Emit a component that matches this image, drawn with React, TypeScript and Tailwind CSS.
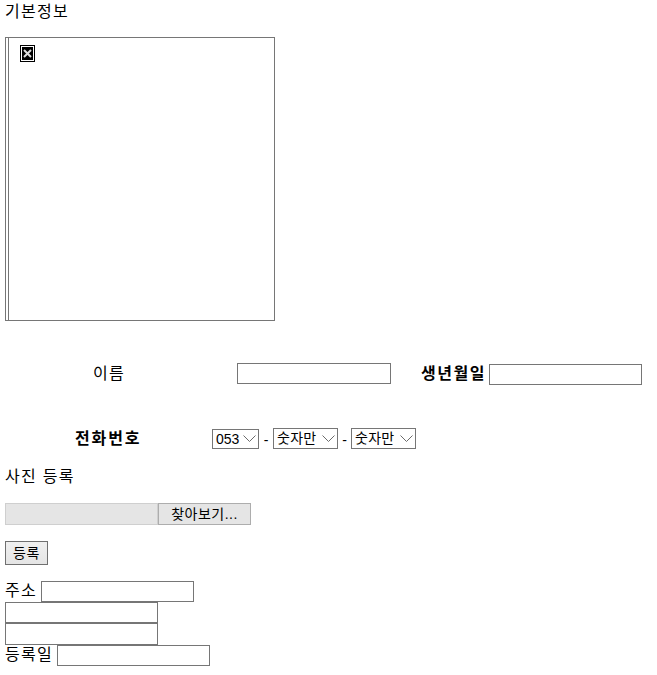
import React from "react";

function Chevron({ className }: { className: string }) {
  return (
    <svg className={className} width="13" height="7" viewBox="0 0 13 7" fill="none">
      <path d="M0.5 0.5 L6.5 6.5 L12.5 0.5" stroke="#6b6b6b" strokeWidth="1" />
    </svg>
  );
}

function Sel({ value, w, h, top, text, chev }: { value: string; w: string; h: string; top: string; text: string; chev: string }) {
  return (
    <div className={`relative ${w} ${h} ${top}`}>
      <select
        defaultValue={value}
        className={`block w-full h-full appearance-none bg-white border border-[#767676] pl-[3px] rounded-none outline-none ${text}`}
      >
        <option>{value}</option>
      </select>
      <Chevron className={`absolute right-[3px] pointer-events-none ${chev}`} />
    </div>
  );
}

const inputBase = "block border border-[#767676] bg-white rounded-none";

export default function App() {
  return (
    <div className="w-[657px] h-[675px] overflow-hidden bg-white text-black pl-[5px] font-['Liberation_Sans','Noto_Sans_CJK_KR',sans-serif] text-[16px] leading-[18px] tracking-[1.3px]">
      <div className="pt-[3px] h-[37px]">기본정보</div>

      <div className="w-[270px] h-[284px] border border-[#767676] pl-[2px]">
        <div className="h-full border-l border-[#767676] pl-[11px] pt-[7px]">
          <div className="w-[15px] h-[17px] border border-black bg-white p-[1px]">
            <div className="w-full h-full bg-black flex items-center justify-center">
              <svg width="9" height="9" viewBox="0 0 9 9">
                <path d="M1 1 L8 8 M8 1 L1 8" stroke="#dddddd" strokeWidth="2" />
              </svg>
            </div>
          </div>
        </div>
      </div>

      <div className="flex mt-[42px] h-[22px]">
        <div className="w-[232px] pl-[88px] pt-[2px]">이름</div>
        <input className={`${inputBase} w-[154px] h-[21px]`} />
        <div className="font-bold ml-[30px] w-[68px] pt-[2px] tracking-[1.5px]">생년월일</div>
        <input className={`${inputBase} w-[153px] h-[21px] mt-[1px]`} />
      </div>

      <div className="flex mt-[43px] h-[21px]">
        <div className="w-[207px] pl-[70px] pt-[2px] font-bold tracking-[1.9px]">전화번호</div>
        <Sel value="053" w="w-[47px]" h="h-[20px]" top="mt-[1px]" text="text-[14px] leading-[16px] tracking-normal" chev="top-[6px]" />
        <div className="w-[14px] text-center text-[14px] pt-[3px] tracking-normal">-</div>
        <Sel value="숫자만" w="w-[65px]" h="h-[21px]" top="mt-0" text="text-[14px] leading-[16px] pb-[2px] tracking-[0.3px]" chev="top-[7px]" />
        <div className="w-[13px] text-center text-[14px] pt-[3px] tracking-normal">-</div>
        <Sel value="숫자만" w="w-[65px]" h="h-[21px]" top="mt-0" text="text-[14px] leading-[16px] pb-[2px] tracking-[0.3px]" chev="top-[7px]" />
      </div>

      <div className="mt-[19px] h-[18px]">사진 등록</div>

      <div className="flex mt-[17px] h-[22px]">
        <div className="w-[153px] bg-[#e5e5e5] border border-[#cfcfcf]" />
        <button className="w-[93px] bg-[#e5e5e5] border border-[#adadad] text-[14px] leading-[16px] text-black tracking-[0.5px]">찾아보기...</button>
      </div>

      <button className="block mt-[16px] w-[43px] h-[24px] border border-[#707070] bg-gradient-to-b from-[#f0f0f0] to-[#e5e5e5] text-[14px] leading-[16px] tracking-[0.5px]">등록</button>

      <div className="flex mt-[16px] h-[21px]">
        <span className="w-[36px] pt-[1px]">주소</span>
        <input className={`${inputBase} w-[153px] h-[21px]`} />
      </div>
      <input className={`${inputBase} w-[153px] h-[21px]`} />
      <input className={`${inputBase} w-[153px] h-[22px]`} />
      <div className="flex h-[21px]">
        <span className="w-[52px] pt-[1px]">등록일</span>
        <input className={`${inputBase} w-[153px] h-[21px]`} />
      </div>
    </div>
  );
}
